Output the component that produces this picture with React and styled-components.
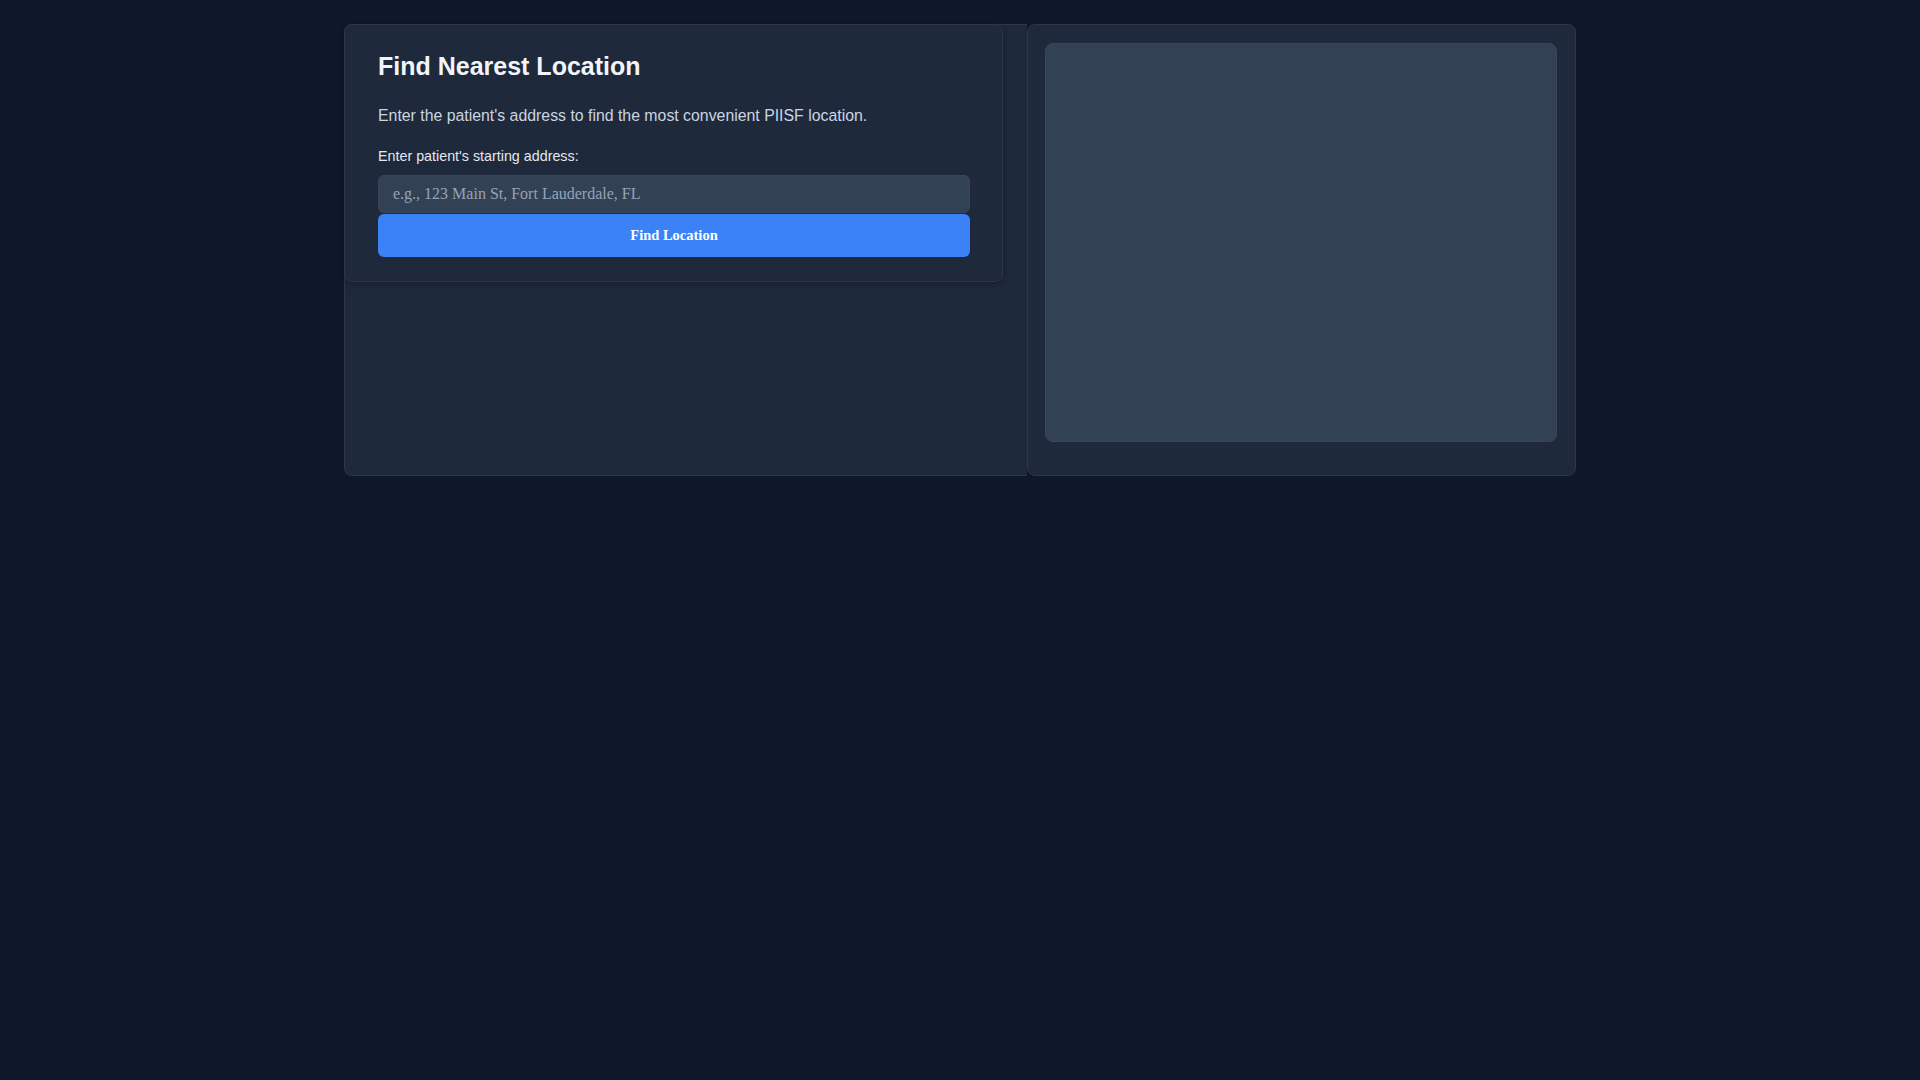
import React from 'react'
import styled, { createGlobalStyle } from 'styled-components';

const GlobalStyle = createGlobalStyle`
  html, body {
    margin:0;
    padding:0;
    background:#0f172a;
    min-height:100vh;
  }
  body {
    font-family:"Liberation Serif", "Times New Roman", serif;
  }
  * { box-sizing:border-box; }
`;

const Layout = styled.div`
  width:1232px;
  margin:24px auto 0;
  display:flex;
  align-items:stretch;
`;

const LeftPane = styled.section`
  flex:1;
  background:#1e293b;
  border:1px solid #2b374a;
  border-right:0;
  border-radius:8px 0 0 8px;
  padding-right:24px;
`;

const Card = styled.div`
  background:#1e293b;
  border:1px solid #2b374a;
  border-radius:8px;
  box-shadow:0 2px 6px rgba(0,0,0,0.25);
  padding:24px 32px 24px 33px;
  margin:-1px 0 0 -1px;
`;

const Title = styled.h2`
  margin:3px 0 26px;
  font-family:"Liberation Sans", Arial, sans-serif;
  font-size:25px;
  font-weight:700;
  color:#f1f5f9;
`;

const Intro = styled.p`
  margin:0 0 23px;
  font-family:"Liberation Sans", Arial, sans-serif;
  font-size:15.85px;
  color:#cbd5e1;
`;

const Label = styled.label`
  display:block;
  margin-bottom:11px;
  font-family:"Liberation Sans", Arial, sans-serif;
  font-size:14.3px;
  color:#e2e8f0;
`;

const Input = styled.input`
  display:block;
  width:100%;
  height:38px;
  padding:0 14px;
  background:#334155;
  border:1px solid #3a475b;
  border-radius:6px;
  color:#f1f5f9;
  font-family:"Liberation Serif", "Times New Roman", serif;
  font-size:16px;
  outline:none;
  &::placeholder { color:#94a3b8; }
`;

const Button = styled.button`
  display:block;
  width:100%;
  height:43px;
  margin-top:1px;
  background:#3b82f6;
  border:0;
  border-radius:6px;
  color:#fff;
  font-family:"Liberation Serif", "Times New Roman", serif;
  font-size:14.5px;
  font-weight:700;
  cursor:pointer;
`;

const MapPanel = styled.aside`
  width:549px;
  background:#1e293b;
  border:1px solid #2b374a;
  border-radius:8px;
  padding:18px 18px 33px 17px;
`;

const MapBox = styled.div`
  width:512px;
  height:399px;
  background:#334155;
  border:1px solid #3a475b;
  border-radius:8px;
`;

const App = () => {
  return (
    <>
      <GlobalStyle />
      <Layout>
        <LeftPane>
          <Card>
            <Title>Find Nearest Location</Title>
            <Intro>Enter the patient's address to find the most convenient PIISF location.</Intro>
            <Label htmlFor="address">Enter patient's starting address:</Label>
            <Input id="address" type="text" placeholder="e.g., 123 Main St, Fort Lauderdale, FL" />
            <Button>Find Location</Button>
          </Card>
        </LeftPane>
        <MapPanel>
          <MapBox />
        </MapPanel>
      </Layout>
    </>
  )
}

export default App
